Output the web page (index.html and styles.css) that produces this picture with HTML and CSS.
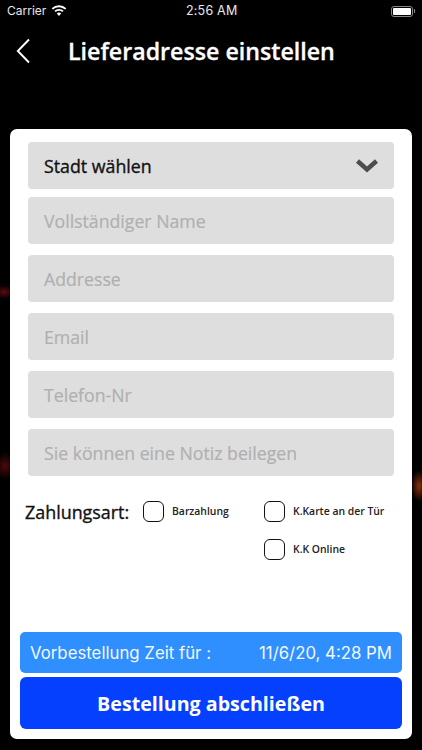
FILE: index.html
```html
<!DOCTYPE html>
<html lang="de">
<head>
<meta charset="utf-8">
<title>Lieferadresse einstellen</title>
<link rel="stylesheet" href="styles.css">
</head>
<body>
<div class="screen">
  <div class="status">
    <div class="status-left">
      <span>Carrier</span>
      <svg class="wifi" width="16" height="12" viewBox="0 0 16 12"><path d="M8 2.200c2.300 0 4.400.9 6 2.400l1.300-1.400A10.600 10.600 0 0 0 8 .3 10.600 10.600 0 0 0 .7 3.200L2 4.600a8.700 8.700 0 0 1 6-2.400zM8 5.800c1.300 0 2.400.5 3.300 1.300l1.300-1.400A6.700 6.700 0 0 0 8 3.900a6.700 6.700 0 0 0-4.600 1.800l1.300 1.400A4.800 4.800 0 0 1 8 5.800zM8 7.500c-.9 0-1.700.3-2.200.9L8 11l2.200-2.600c-.5-.6-1.300-.9-2.200-.9z" fill="#fff"/></svg>
    </div>
    <span class="clock">2:56 AM</span>
    <div class="battery"><span class="battery-fill"></span></div>
  </div>
  <header class="nav">
    <svg class="back" width="14" height="26" viewBox="0 0 14 26"><path d="M13 1.500 1.800 13 13 24.500" fill="none" stroke="#fff" stroke-width="1.900"/></svg>
    <h1>Lieferadresse einstellen</h1>
  </header>
  <main class="card">
    <div class="fields">
      <div class="field select">
        <span>Stadt wählen</span>
        <svg width="24" height="15" viewBox="0 0 24 15"><path d="M2.500 3 12 11.500 21.500 3" fill="none" stroke="#4d4d4d" stroke-width="4.500"/></svg>
      </div>
      <div class="field placeholder">Vollständiger Name</div>
      <div class="field placeholder">Addresse</div>
      <div class="field placeholder">Email</div>
      <div class="field placeholder">Telefon-Nr</div>
      <div class="field placeholder">Sie können eine Notiz beilegen</div>
    </div>
    <section class="payment">
      <div class="pay-label">Zahlungsart:</div>
      <div class="pay-options">
        <label class="option"><span class="box"></span><span>Barzahlung</span></label>
        <label class="option"><span class="box"></span><span>K.Karte an der Tür</span></label>
        <span></span>
        <label class="option"><span class="box"></span><span>K.K Online</span></label>
      </div>
    </section>
    <div class="actions">
      <div class="preorder"><span>Vorbestellung Zeit für :</span><span>11/6/20, 4:28 PM</span></div>
      <button class="submit">Bestellung abschließen</button>
    </div>
  </main>
</div>
</body>
</html>
```
FILE: styles.css
```css
* { box-sizing: border-box; }
html, body { margin: 0; padding: 0; }
body { width: 422px; height: 750px; overflow: hidden; background: #000; font-family: "Open Sans", sans-serif; }
.screen {
  width: 422px; height: 750px; display: flex; flex-direction: column;
  background:
    radial-gradient(ellipse 10px 7px at 4px 292px, rgba(150,20,25,.6), transparent),
    radial-gradient(ellipse 10px 14px at 5px 466px, rgba(130,15,20,.6), transparent),
    radial-gradient(ellipse 8px 16px at 419px 486px, rgba(170,60,15,.8), transparent),
    #000;
}
.status { height: 22px; padding: 0 9px 0 7px; display: flex; align-items: center; justify-content: space-between; position: relative; color: #e8e8e8; font: 12px/22px Inter, sans-serif; flex: none; }
.status-left { display: flex; align-items: center; gap: 5px; }
.clock { font-size: 12.500px; letter-spacing: .2px; position: absolute; left: 186px; top: 0; }
.wifi { display: block; }
.battery { width: 22px; height: 11px; border: 1px solid #888; border-radius: 3px; padding: 1px; position: relative; }
.battery::after { content: ""; position: absolute; right: -3px; top: 2.500px; width: 1.500px; height: 4px; background: #888; }
.battery-fill { display: block; height: 100%; background: #fff; border-radius: 1px; }
.nav { height: 58px; display: flex; align-items: center; padding-left: 16px; gap: 38px; flex: none; }
.back { display: block; flex: none; }
h1 { margin: 0; color: #fff; font-size: 23.200px; font-weight: 600; line-height: 30px; -webkit-text-stroke: .3px #fff; }
.card { margin: 49px 10px 0; height: 610px; background: #fff; border-radius: 7px; display: flex; flex-direction: column; padding: 13px 10px 10px; }
.fields { display: flex; flex-direction: column; gap: 11px; padding: 0 8px; }
.field { height: 47px; background: #dedede; border-radius: 4px; display: flex; align-items: center; padding: 0 16px; font-size: 17.700px; }
.select { justify-content: space-between; color: #111; font-size: 17.800px; -webkit-text-stroke: .35px #111; padding-right: 15px; margin-bottom: -3px; }
.placeholder { color: #b0b0b0; -webkit-text-stroke: .2px #b0b0b0; }
.payment { display: flex; margin-top: 20px; }
.pay-label { font-size: 17.900px; color: #111; -webkit-text-stroke: .35px #111; line-height: 32px; margin-left: 5px; width: 118px; flex: none; }
.pay-options { display: grid; grid-template-columns: 121px auto; row-gap: 12px; }
.option { display: flex; align-items: center; gap: 8px; font-size: 10.400px; font-weight: 600; color: #222; height: 22px; margin-top: 4px; }
.box { width: 21px; height: 21px; border: 1.500px solid #111; border-radius: 6px; flex: none; background: #fff; }
.actions { margin-top: auto; display: flex; flex-direction: column; gap: 4px; }
.preorder { height: 41px; background: #2f8fff; border-radius: 5px; color: #f4f8ff; display: flex; align-items: center; justify-content: space-between; padding: 0 10px; font: 400 16.800px Inter, sans-serif; }
.submit { height: 52px; background: #0640ff; border: 0; border-radius: 6px; color: #fff; font: 700 19.650px "Open Sans", sans-serif; padding: 0; }
```
